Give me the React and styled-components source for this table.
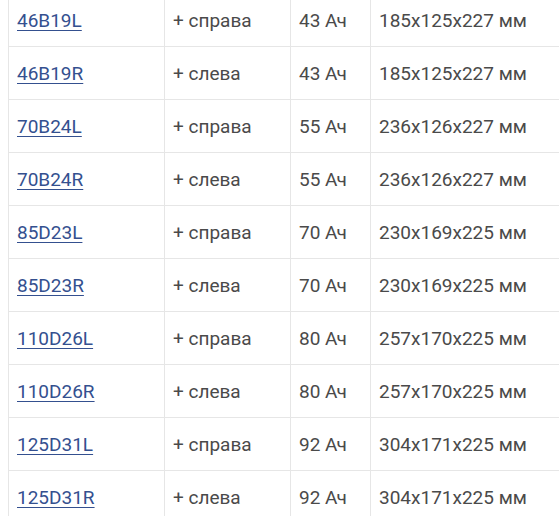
import React from 'react';
import styled, { createGlobalStyle } from 'styled-components';

const GlobalStyle = createGlobalStyle`
  html, body {
    margin: 0;
    padding: 0;
    background: #fff;
    overflow: hidden;
  }
`;

const Wrap = styled.div`
  margin-top: -7px;
  padding-left: 8px;
`;

const Table = styled.table`
  border-collapse: collapse;
  table-layout: fixed;
  width: 640px;
  font-family: Roboto, "Liberation Sans", sans-serif;
  font-size: 19px;
  color: #4a4a4a;
`;

const Cell = styled.td`
  width: ${(p) => p.w}px;
  height: 53px;
  padding: 0 8px;
  border: 1px solid #e6e6e6;
  vertical-align: middle;
  white-space: nowrap;
  box-sizing: border-box;
`;

const Link = styled.a`
  color: #34508f;
  text-decoration: underline;
  text-underline-offset: 3px;
  text-decoration-thickness: 1px;
`;

const rows = [
  ['46B19L', '+ справа', '43 Ач', '185x125x227 мм'],
  ['46B19R', '+ слева', '43 Ач', '185x125x227 мм'],
  ['70B24L', '+ справа', '55 Ач', '236x126x227 мм'],
  ['70B24R', '+ слева', '55 Ач', '236x126x227 мм'],
  ['85D23L', '+ справа', '70 Ач', '230x169x225 мм'],
  ['85D23R', '+ слева', '70 Ач', '230x169x225 мм'],
  ['110D26L', '+ справа', '80 Ач', '257x170x225 мм'],
  ['110D26R', '+ слева', '80 Ач', '257x170x225 мм'],
  ['125D31L', '+ справа', '92 Ач', '304x171x225 мм'],
  ['125D31R', '+ слева', '92 Ач', '304x171x225 мм'],
];

export default function App() {
  return (
    <Wrap>
      <GlobalStyle />
      <Table>
        <tbody>
          {rows.map(([model, pol, cap, size]) => (
            <tr key={model}>
              <Cell w={156}><Link href="#">{model}</Link></Cell>
              <Cell w={126}>{pol}</Cell>
              <Cell w={80}>{cap}</Cell>
              <Cell w={278}>{size}</Cell>
            </tr>
          ))}
        </tbody>
      </Table>
    </Wrap>
  );
}
